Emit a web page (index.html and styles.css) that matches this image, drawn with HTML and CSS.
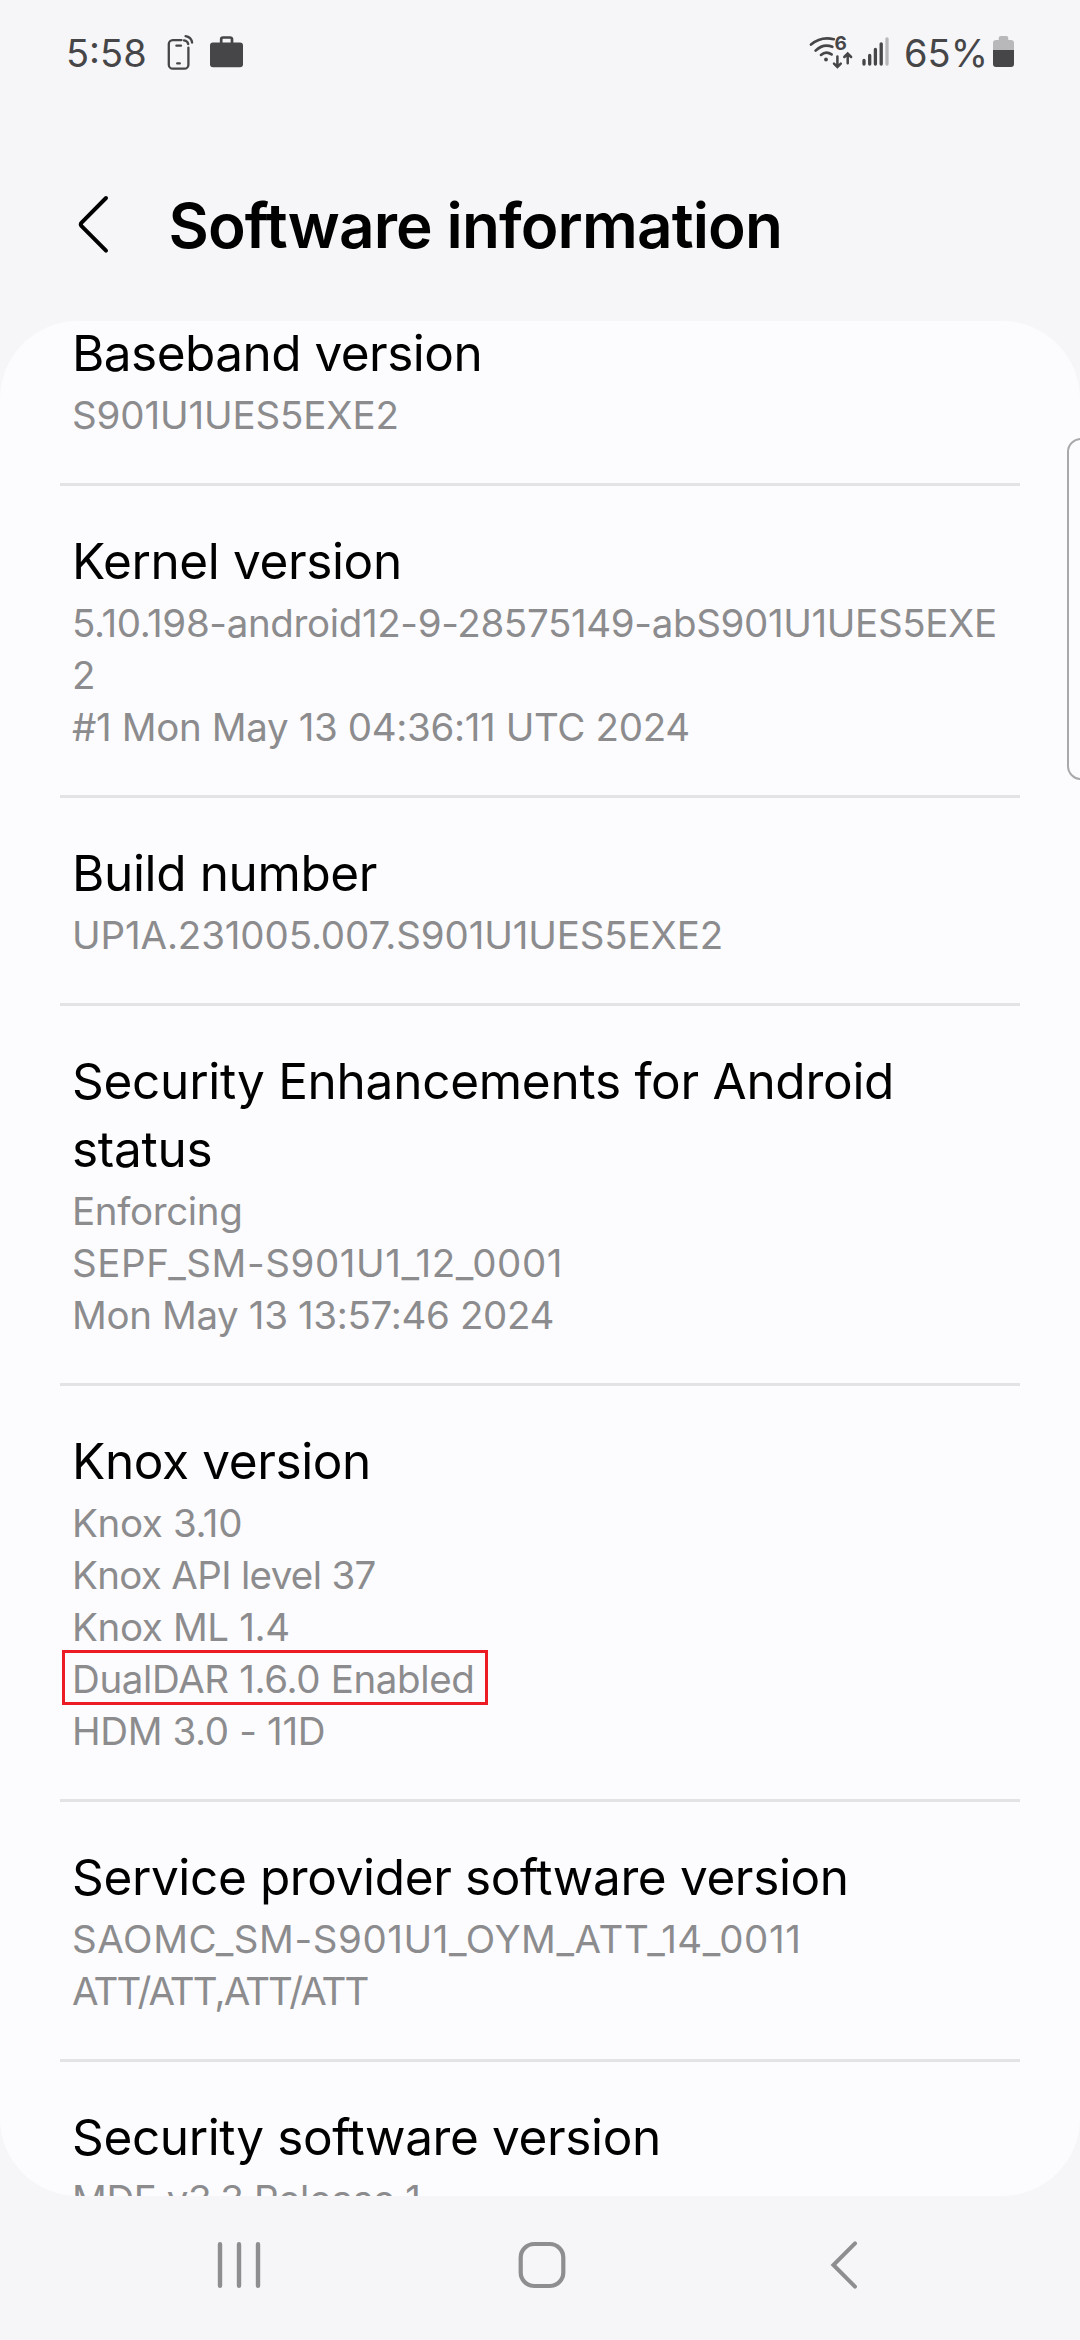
FILE: index.html
```html
<!DOCTYPE html>
<html lang="en">
<head>
<meta charset="utf-8">
<title>Software information</title>
<link rel="stylesheet" href="styles.css">
</head>
<body>
<div class="screen">
  <div class="status-bar">
    <div class="status-group">
      <span class="clock">5:58</span>
      <svg class="icon-phone" viewBox="162 32 36 42" width="36" height="42" fill="none" stroke="#464648" stroke-width="2.3" stroke-linecap="round">
        <path d="M181.5 40.1h-8.7a4 4 0 0 0-4 4v20.6a4 4 0 0 0 4 4h11.600a4 4 0 0 0 4-4V47.600"/>
        <path d="M176.400 45.700h4.600M177.200 63.400h2.600M184 40.400q3.600.4 4.200 3.600M185.600 36.100q5.600.9 6.500 6.400"/>
      </svg>
      <svg class="icon-work" viewBox="206 32 42 42" width="42" height="42">
        <rect x="210" y="42.600" width="33" height="24.600" rx="3" fill="#464648"/>
        <path d="M221.200 43.500v-4.200a1.800 1.800 0 0 1 1.800-1.800h7.200a1.800 1.800 0 0 1 1.800 1.800v4.200" fill="none" stroke="#464648" stroke-width="2.700"/>
      </svg>
    </div>
    <div class="status-group">
      <svg class="icon-wifi" viewBox="808 32 48 42" width="48" height="42" fill="none" stroke="#464648" stroke-width="2.700" stroke-linecap="round">
        <path d="M811 44.600Q821 36 833.800 39.200M815.600 50.600Q823.400 43 832.300 46.800M821 54.900Q826 50.600 831.600 54.400"/>
        <circle cx="826" cy="59.500" r="1.900" fill="#464648" stroke="none"/>
        <path d="M837.400 56.500v10M834 63.600l3.400 3.400l3.400-3.400M847.700 63.300v-9.500M844.300 57l3.400-3.400l3.400 3.400" stroke-width="2.500"/>
        <text class="wifi-gen" x="834.600" y="50.200">6</text>
      </svg>
      <svg class="icon-signal" viewBox="860 32 32 42" width="32" height="42" stroke="#464648" stroke-width="3.300" stroke-linecap="round">
        <path d="M864 60.500v3.600M869.700 55.500v8.600M875.400 49.500v14.600M881.200 43.800v20.300"/>
        <path d="M887 38.800v25.300" stroke="#b8b8ba"/>
      </svg>
      <span class="battery-level">65%</span>
      <svg class="icon-battery" viewBox="990 32 28 42" width="28" height="42">
        <path d="M993 50v-7a3 3 0 0 1 3-3h2.700v-2a2 2 0 0 1 2-2h5.600a2 2 0 0 1 2 2v2h2.700a3 3 0 0 1 3 3v7z" fill="#b8b8ba"/>
        <path d="M993 50h21v14a3 3 0 0 1-3 3h-15a3 3 0 0 1-3-3z" fill="#464648"/>
      </svg>
    </div>
  </div>

  <header class="app-bar">
    <svg class="back" viewBox="0 0 40 64" width="40" height="64" fill="none" stroke="#000" stroke-width="4" stroke-linecap="round" stroke-linejoin="round">
      <path d="M33 6L8.600 30.600Q7 32.400 8.600 34.200L33 58.600"/>
    </svg>
    <h1>Software information</h1>
  </header>

  <main class="card">
    <section class="item">
      <h2 class="snug">Baseband version</h2>
      <p class="wide">S901U1UES5EXE2</p>
    </section>
    <section class="item">
      <h2>Kernel version</h2>
      <p>5.10.198-android12-9-28575149-abS901U1UES5EXE<br>2</p>
      <p>#1 Mon May 13 04:36:11 UTC 2024</p>
    </section>
    <section class="item">
      <h2>Build number</h2>
      <p class="wide">UP1A.231005.007.S901U1UES5EXE2</p>
    </section>
    <section class="item">
      <h2 class="roomy">Security Enhancements for Android status</h2>
      <p>Enforcing</p>
      <p class="underscored">SEPF_SM-S901U1_12_0001</p>
      <p>Mon May 13 13:57:46 2024</p>
    </section>
    <section class="item">
      <h2>Knox version</h2>
      <p>Knox 3.10</p>
      <p class="api">Knox API level 37</p>
      <p>Knox ML 1.4</p>
      <p><span class="highlight">DualDAR 1.6.0 Enabled</span></p>
      <p>HDM 3.0 - 11D</p>
    </section>
    <section class="item">
      <h2>Service provider software version</h2>
      <p class="underscored">SAOMC_SM-S901U1_OYM_ATT_14_0011</p>
      <p class="carrier">ATT/ATT,ATT/ATT</p>
    </section>
    <section class="item">
      <h2>Security software version</h2>
      <p>MDF v3.3 Release 1</p>
    </section>
  </main>

  <nav class="nav-bar">
    <svg viewBox="0 0 60 60" width="60" height="60" stroke="#8e8e90" stroke-width="4.400" stroke-linecap="round">
      <path d="M11 9.200v41.600M30 9.200v41.600M49 9.200v41.600"/>
    </svg>
    <svg viewBox="0 0 60 60" width="60" height="60" fill="none" stroke="#8e8e90" stroke-width="4.200">
      <rect x="8.700" y="9" width="42.600" height="42" rx="13.500"/>
    </svg>
    <svg viewBox="0 0 60 60" width="60" height="60" fill="none" stroke="#8e8e90" stroke-width="4" stroke-linecap="round">
      <path d="M41 8.400L19.400 30L41 51.600"/>
    </svg>
  </nav>

  <div class="edge-panel"></div>
</div>
</body>
</html>
```
FILE: styles.css
```css
* {
  box-sizing: border-box;
  margin: 0;
  padding: 0;
}

body {
  background: #f6f6f8;
  font-family: Inter, Roboto, sans-serif;
  color: #000;
}

.screen {
  position: relative;
  display: flex;
  flex-direction: column;
  width: 1080px;
  height: 2340px;
  overflow: hidden;
}

svg {
  display: block;
  flex: none;
}

.status-bar {
  display: flex;
  justify-content: space-between;
  height: 106px;
  padding: 0 62px 0 66px;
  color: #464648;
  font-size: 38px;
  line-height: 104px;
}

.status-group {
  display: flex;
  align-items: center;
  height: 106px;
}

.clock {
  width: 96px;
}

.icon-work {
  margin-left: 8px;
}

.icon-signal {
  margin: 0 12px 0 4px;
}

.battery-level {
  width: 86px;
}

.wifi-gen {
  font-size: 19px;
  font-weight: 700;
  fill: #464648;
  stroke: none;
}

.app-bar {
  display: flex;
  align-items: center;
  gap: 56px;
  height: 215px;
  padding: 24px 0 0 72.5px;
}

.app-bar h1 {
  font-size: 62px;
  font-weight: 600;
  line-height: 80px;
  letter-spacing: -0.87px;
  white-space: nowrap;
}

.back {
  margin-top: -4px;
}

.card {
  height: 1875px;
  background: #fcfcfe;
  border-radius: 78px;
  overflow: hidden;
}

.item {
  margin: 0 60px;
  padding: 41px 12px 42px;
  border-bottom: 3px solid #e3e3e5;
}

.item:first-child {
  margin-top: -43px;
}

.item h2 {
  margin-bottom: 2px;
  font-size: 49.5px;
  font-weight: 400;
  line-height: 68px;
  letter-spacing: -0.37px;
}

.item h2.snug {
  letter-spacing: -0.53px;
}

.item h2.roomy {
  letter-spacing: -0.26px;
}

.item p {
  color: #8c8c8e;
  font-size: 38.5px;
  line-height: 52px;
  letter-spacing: -0.36px;
  white-space: nowrap;
}

.item p.wide {
  letter-spacing: -0.14px;
}

.item p.api {
  letter-spacing: -0.67px;
}

.item p.underscored {
  letter-spacing: 0.58px;
}

.item p.carrier {
  letter-spacing: -1.88px;
}

.highlight {
  display: inline-block;
  height: 55px;
  margin: -3px 0 0 -10px;
  padding: 0 10px 0 7px;
  border: 3px solid #ed1c24;
  line-height: 52px;
  vertical-align: top;
}

.nav-bar {
  display: flex;
  justify-content: space-between;
  height: 144px;
  padding: 39px 206px 0 209px;
}

.edge-panel {
  position: absolute;
  top: 438px;
  right: -20px;
  width: 33px;
  height: 342px;
  border: 2px solid #a9a9ab;
  border-radius: 14px;
}
```
